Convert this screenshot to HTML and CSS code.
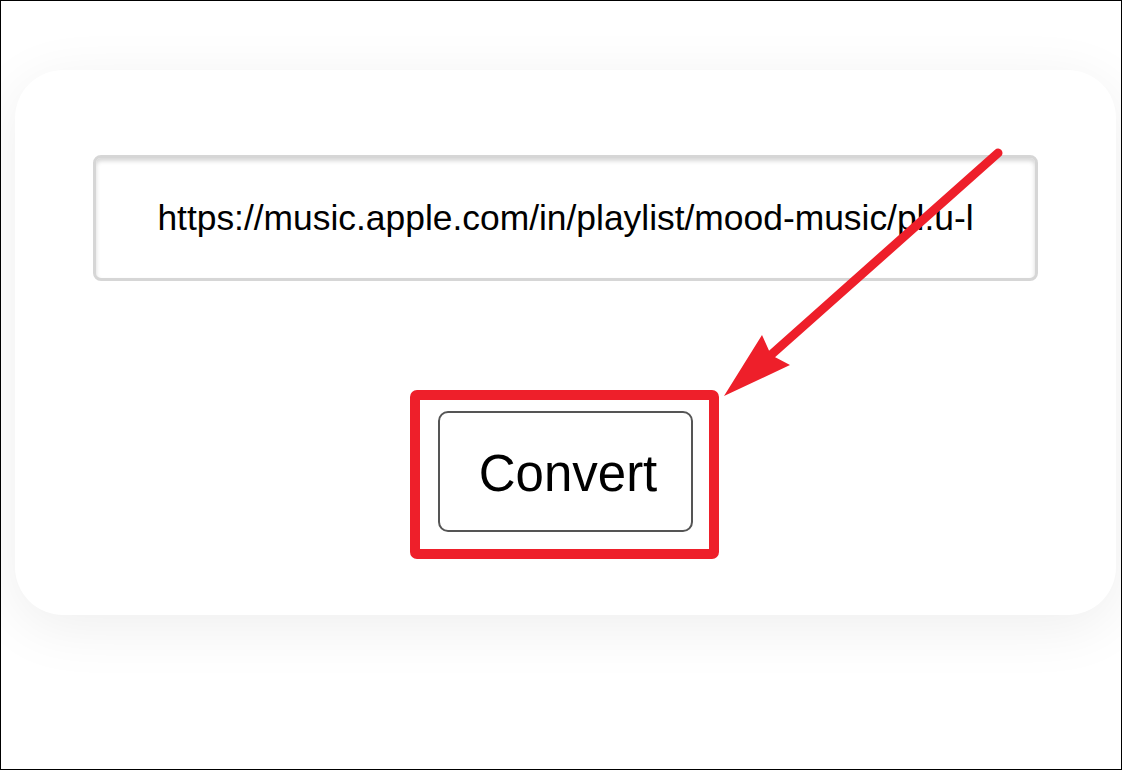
FILE: index.html
```html
<!DOCTYPE html>
<html lang="en">
<head>
<meta charset="utf-8">
<title>Convert</title>
<link rel="stylesheet" href="styles.css">
</head>
<body>
<div class="frame">
  <div class="card">
    <input class="url" type="text" value="https://music.apple.com/in/playlist/mood-music/pl.u-l" readonly>
    <button class="convert" type="button">Convert</button>
  </div>
  <svg class="annot" width="1122" height="770" viewBox="0 0 1122 770" aria-hidden="true">
    <rect x="415" y="395" width="299" height="159" rx="2" fill="none" stroke="#ee1f2a" stroke-width="10"/>
    <line x1="998" y1="153" x2="772" y2="354" stroke="#ee1f2a" stroke-width="9" stroke-linecap="round"/>
    <polygon points="724,396 762,335 771,355 790,365" fill="#ee1f2a"/>
  </svg>
</div>
</body>
</html>
```

FILE: styles.css
```css
html, body {
  margin: 0;
  padding: 0;
  background: #ffffff;
}

.frame {
  position: relative;
  width: 1122px;
  height: 770px;
  box-sizing: border-box;
  border: 1px solid #000;
  background: #fff;
  overflow: hidden;
  padding: 69px 5px 0 14px;
}

.card {
  height: 545px;
  box-sizing: border-box;
  background: #fff;
  border-radius: 48px;
  box-shadow: 0 12px 60px rgba(0, 0, 0, 0.07);
  display: flex;
  flex-direction: column;
  align-items: center;
  padding-top: 85px;
  gap: 130px;
}

.url {
  width: 945px;
  height: 126px;
  box-sizing: border-box;
  border: 3px solid #d6d6d6;
  border-radius: 8px;
  box-shadow: inset 0 3px 4px rgba(0, 0, 0, 0.16);
  background: #fff;
  font-family: "Liberation Sans", Arial, sans-serif;
  font-size: 35.4px;
  color: #000;
  text-align: center;
  padding: 0 20px;
  outline: none;
}

.convert {
  width: 255px;
  height: 121px;
  box-sizing: border-box;
  border: 2.5px solid #555;
  border-radius: 10px;
  background: #fff;
  font-family: "Liberation Sans", Arial, sans-serif;
  font-size: 51px;
  color: #000;
  padding: 4px 0 0 5px;
  cursor: pointer;
}

.annot {
  position: absolute;
  left: -1px;
  top: -1px;
  pointer-events: none;
}
```
